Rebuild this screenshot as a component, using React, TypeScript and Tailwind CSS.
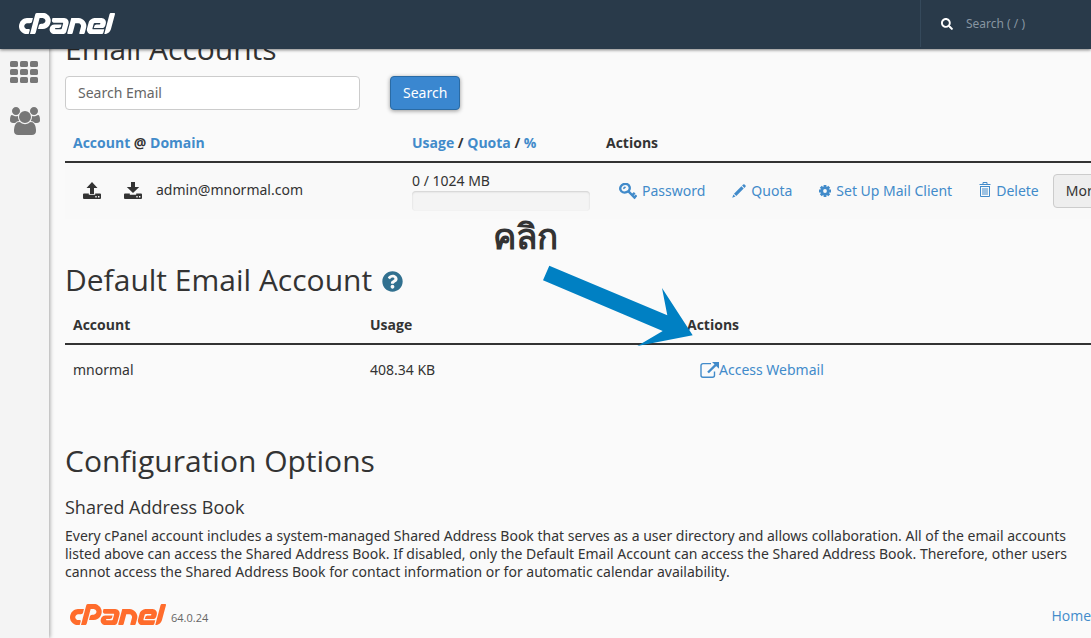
import type { ReactNode } from "react";
import { SiCpanel } from "react-icons/si";
import { FaSearch, FaQuestionCircle } from "react-icons/fa";

function GridIcon() {
  return (
    <svg viewBox="0 0 28 22" className="h-[22px] w-7" fill="currentColor" aria-hidden="true">
      {[0, 8, 16].map((y) =>
        [0, 10, 20].map((x) => <rect key={`${x}-${y}`} x={x} y={y} width="8" height="6" rx="1.6" />),
      )}
    </svg>
  );
}

function UsersIcon() {
  return (
    <svg viewBox="0 0 1920 1792" className="h-7 w-[30px]" fill="currentColor" aria-hidden="true">
      <path d="M593 896q-162 5-265 128h-134q-82 0-138-40.500t-56-118.500q0-353 124-353 6 0 43.500 21t97.500 42.500 119 21.500q67 0 133-23-5 37-5 66 0 139 81 256zm1071 637q0 120-73 189.500t-194 69.500h-874q-121 0-194-69.500t-73-189.500q0-53 3.500-103.500t14-109 26.500-108.500 43-97.500 62-81 85.500-53.500 111.500-20q10 0 43 21.500t73 48 107 48 135 21.500 135-21.500 107-48 73-48 43-21.500q61 0 111.500 20t85.500 53.500 62 81 43 97.500 26.500 108.500 14 109 3.500 103.500zm-1024-1277q0 106-75 181t-181 75-181-75-75-181 75-181 181-75 181 75 75 181zm704 384q0 159-112.500 271.500t-271.500 112.500-271.500-112.500-112.500-271.500 112.500-271.500 271.500-112.500 271.500 112.500 112.500 271.500zm576 225q0 78-56 118.500t-138 40.500h-134q-103-123-265-128 81-117 81-256 0-29-5-66 66 23 133 23 59 0 119-21.500t97.500-42.500 43.500-21q124 0 124 353zm-128-609q0 106-75 181t-181 75-181-75-75-181 75-181 181-75 181 75 75 181z" />
    </svg>
  );
}

function DriveIcon({ down }: { down?: boolean }) {
  return (
    <svg viewBox="0 0 18 17" className="h-[17px] w-[18px]" fill="currentColor" aria-hidden="true">
      {down ? <path d="M7 0h4v5h4.200L9 11 2.800 5H7z" /> : <path d="M9 0l5.500 6H11v6H7V6H3.500z" />}
      <path
        fillRule="evenodd"
        d="M1 11.500h4.800v1.300h6.400v-1.300H17a1 1 0 0 1 1 1V16a1 1 0 0 1-1 1H1a1 1 0 0 1-1-1v-3.500a1 1 0 0 1 1-1zM12.300 14v1.400h1.400V14zM15 14v1.400h1.400V14z"
      />
    </svg>
  );
}

function KeyIcon() {
  return (
    <svg viewBox="0 0 18 17" className="h-[17px] w-[18px]" fill="none" stroke="currentColor" aria-hidden="true">
      <ellipse cx="6" cy="5.200" rx="4.800" ry="4.300" strokeWidth="2.400" transform="rotate(-20 6 5.200)" />
      <path d="M4.300 5.600l2.200-1.800" strokeWidth="1.600" />
      <path d="M9.300 8.200l7 7.300M13.300 12.200l2.400-2.300M15.400 14.300l2.200-2" strokeWidth="2.400" />
    </svg>
  );
}

function PencilIcon() {
  return (
    <svg viewBox="0 0 14 14" className="h-3.5 w-3.5" fill="currentColor" aria-hidden="true">
      <path d="M11.200.5a1 1 0 0 1 1.400 0l.9.900a1 1 0 0 1 0 1.400l-1.100 1.100-2.300-2.300zM9.400 2.300l2.300 2.300-7.400 7.400L2 9.700zM1.400 10.500l2.100 2.100L.2 13.800z" />
    </svg>
  );
}

function GearIcon() {
  return (
    <svg viewBox="0 0 12 12" className="h-3 w-3" aria-hidden="true">
      <g stroke="currentColor" strokeWidth="2.800">
        <path d="M6 0v12M0 6h12M1.800 1.800l8.400 8.400M10.200 1.800l-8.400 8.400" />
      </g>
      <circle cx="6" cy="6" r="4.600" fill="currentColor" />
      <circle cx="6" cy="6" r="1.900" fill="#f9f9f9" />
    </svg>
  );
}

function TrashIcon() {
  return (
    <svg viewBox="0 0 12 15" className="mb-1 h-[15px] w-3" fill="none" stroke="currentColor" aria-hidden="true">
      <path d="M.5 2.500h11M4 2.500v-2h4v2M1 4.500h10M1.500 4.500v10h9v-10M4 6v7M6 6v7M8 6v7" />
    </svg>
  );
}

function ExternalIcon() {
  return (
    <svg viewBox="0 0 19 16" className="h-4 w-[19px]" fill="none" stroke="currentColor" aria-hidden="true">
      <path d="M11 1.600H3a2 2 0 0 0-2 2v9.600a2 2 0 0 0 2 2h9.500a2 2 0 0 0 2-2V9.500" strokeWidth="1.400" />
      <path d="M8 10.500l8-7.800" strokeWidth="2.400" />
      <path d="M12 0h7v6.800z" fill="currentColor" stroke="none" />
    </svg>
  );
}

function Action({ icon, children }: { icon: ReactNode; children: ReactNode }) {
  return (
    <a href="#" className="flex h-[34px] items-center gap-[5px] px-[13px] text-[#428bca]">
      {icon}
      {children}
    </a>
  );
}

function Sort({ children }: { children: ReactNode }) {
  return (
    <a href="#" className="text-[#428bca]">
      {children}
    </a>
  );
}

export default function App() {
  return (
    <div className="flex h-screen flex-col overflow-hidden bg-[#fafafa] font-['Open_Sans',sans-serif] text-sm leading-5 text-[#333333]">
      <header className="relative z-10 flex h-[49px] shrink-0 items-stretch justify-between bg-[#293a4a] pb-[2px] shadow-[0_1px_3px_rgba(0,0,0,0.5)]">
        <a href="#" aria-label="cPanel" className="flex items-center pl-[19px] text-white">
          <SiCpanel viewBox="0 9.400 24 5.200" className="h-[21px] w-24" />
        </a>
        <label className="flex w-[171px] items-center gap-[13px] border-l border-[#35495b] pl-5 text-white">
          <FaSearch className="h-3 w-3 shrink-0" />
          <input
            aria-label="Search"
            placeholder="Search ( / )"
            className="w-24 bg-transparent font-['Noto_Sans',sans-serif] text-xs outline-none placeholder:text-[#8795a1]"
          />
        </label>
      </header>

      <div className="-mt-[17px] flex min-h-0 grow">
        <nav className="flex w-[49px] shrink-0 flex-col gap-6 bg-[#f4f4f4] pt-[29px] pl-[10px] text-[#777777] shadow-[1px_0_4px_rgba(0,0,0,0.35)]">
          <a href="#" aria-label="Home">
            <GridIcon />
          </a>
          <a href="#" aria-label="User management">
            <UsersIcon />
          </a>
        </nav>

        <main className="relative min-w-0 grow overflow-hidden pl-4">
          <h1 className="text-[30px] leading-[33px]">Email Accounts</h1>

          <form className="mt-[11px] flex gap-[30px]" onSubmit={(e) => e.preventDefault()}>
            <input
              aria-label="Search Email"
              placeholder="Search Email"
              className="h-[34px] w-[295px] rounded border border-[#cccccc] bg-white px-3 pb-[2px] font-['Noto_Sans',sans-serif] outline-none placeholder:text-[#666666]"
            />
            <button className="h-[34px] rounded-sm border border-[#2a6ba5] bg-[#3a87d0] px-3 font-['Noto_Sans',sans-serif] text-white shadow-[0_1px_4px_rgba(0,0,0,0.4)]">
              Search
            </button>
          </form>

          <table className="mt-[15px] w-full table-fixed border-collapse text-left whitespace-nowrap">
            <thead>
              <tr className="border-b-2 border-[#333333]">
                <th className="w-[339px] p-2">
                  <Sort>Account</Sort> @ <Sort>Domain</Sort>
                </th>
                <th className="w-[194px] p-2">
                  <Sort>Usage</Sort> / <Sort>Quota</Sort> / <Sort>%</Sort>
                </th>
                <th className="p-2">Actions</th>
              </tr>
            </thead>
            <tbody className="font-['Noto_Sans',sans-serif]">
              <tr className="bg-[#f9f9f9]">
                <td className="p-2">
                  <div className="flex items-center pb-[2px] pl-[10px]">
                    <DriveIcon />
                    <span className="pr-[14px] pl-[23px]">
                      <DriveIcon down />
                    </span>
                    admin@mnormal.com
                  </div>
                </td>
                <td className="p-2">
                  <div>0 / 1024 MB</div>
                  <div className="h-5 rounded bg-[#f4f4f4] shadow-[inset_0_1px_2px_rgba(0,0,0,0.15)]" />
                </td>
                <td className="p-2">
                  <div className="flex items-center gap-[1px]">
                    <Action icon={<KeyIcon />}>Password</Action>
                    <Action icon={<PencilIcon />}>Quota</Action>
                    <Action icon={<GearIcon />}>Set Up Mail Client</Action>
                    <Action icon={<TrashIcon />}>Delete</Action>
                    <button className="h-[34px] shrink-0 rounded-sm border border-[#cccccc] bg-[#eeeeee] px-3">
                      More
                    </button>
                  </div>
                </td>
              </tr>
            </tbody>
          </table>

          <h2 className="mt-11 flex items-center gap-[10px] text-[30px] leading-[33px]">
            Default Email Account
            <FaQuestionCircle className="mt-1 h-[21px] w-[21px] text-[#31708f]" />
          </h2>

          <table className="mt-[11px] w-full table-fixed border-collapse text-left">
            <thead>
              <tr className="border-b-2 border-[#333333]">
                <th className="w-[297px] p-2">Account</th>
                <th className="w-[317px] p-2">Usage</th>
                <th className="p-2">Actions</th>
              </tr>
            </thead>
            <tbody className="font-['Noto_Sans',sans-serif]">
              <tr>
                <td className="p-2">mnormal</td>
                <td className="p-2">408.34 KB</td>
                <td className="p-2">
                  <a href="#" className="flex h-[34px] items-center px-[13px] text-[#428bca]">
                    <ExternalIcon />
                    Access Webmail
                  </a>
                </td>
              </tr>
            </tbody>
          </table>

          <h2 className="mt-[49px] text-[30px] leading-[33px]">Configuration Options</h2>
          <h3 className="mt-5 text-lg leading-5">Shared Address Book</h3>
          <p className="mt-[10px] font-['Noto_Sans',sans-serif] leading-[18px] whitespace-nowrap">
            Every cPanel account includes a system-managed Shared Address Book that serves as a user directory and allows collaboration. All of the email accounts
            <br />
            listed above can access the Shared Address Book. If disabled, only the Default Email Account can access the Shared Address Book. Therefore, other users
            <br />
            cannot access the Shared Address Book for contact information or for automatic calendar availability.
          </p>

          <footer className="mt-[19px] flex items-center pl-[5px]">
            <SiCpanel viewBox="0 9.400 24 5.200" className="h-[21px] w-24 text-[#ff6c2c]" />
            <span className="pt-2 pl-[5px] text-[11px] text-[#666666]">64.0.24</span>
            <a href="#" className="ml-auto pt-1 text-[#428bca]">
              Home
            </a>
          </footer>

          <div className="absolute top-[184px] left-[444px] text-[35px] leading-10 font-bold">คลิก</div>
          <svg viewBox="0 0 150 81" className="absolute top-[233px] left-[494px] h-[81px] w-[150px]" aria-hidden="true">
            <path d="M6.300.7L124.300 50.300 119 23 149.700 70.300 94.300 81 119.700 66 0 15.300z" fill="#0080c3" />
          </svg>
        </main>
      </div>
    </div>
  );
}
